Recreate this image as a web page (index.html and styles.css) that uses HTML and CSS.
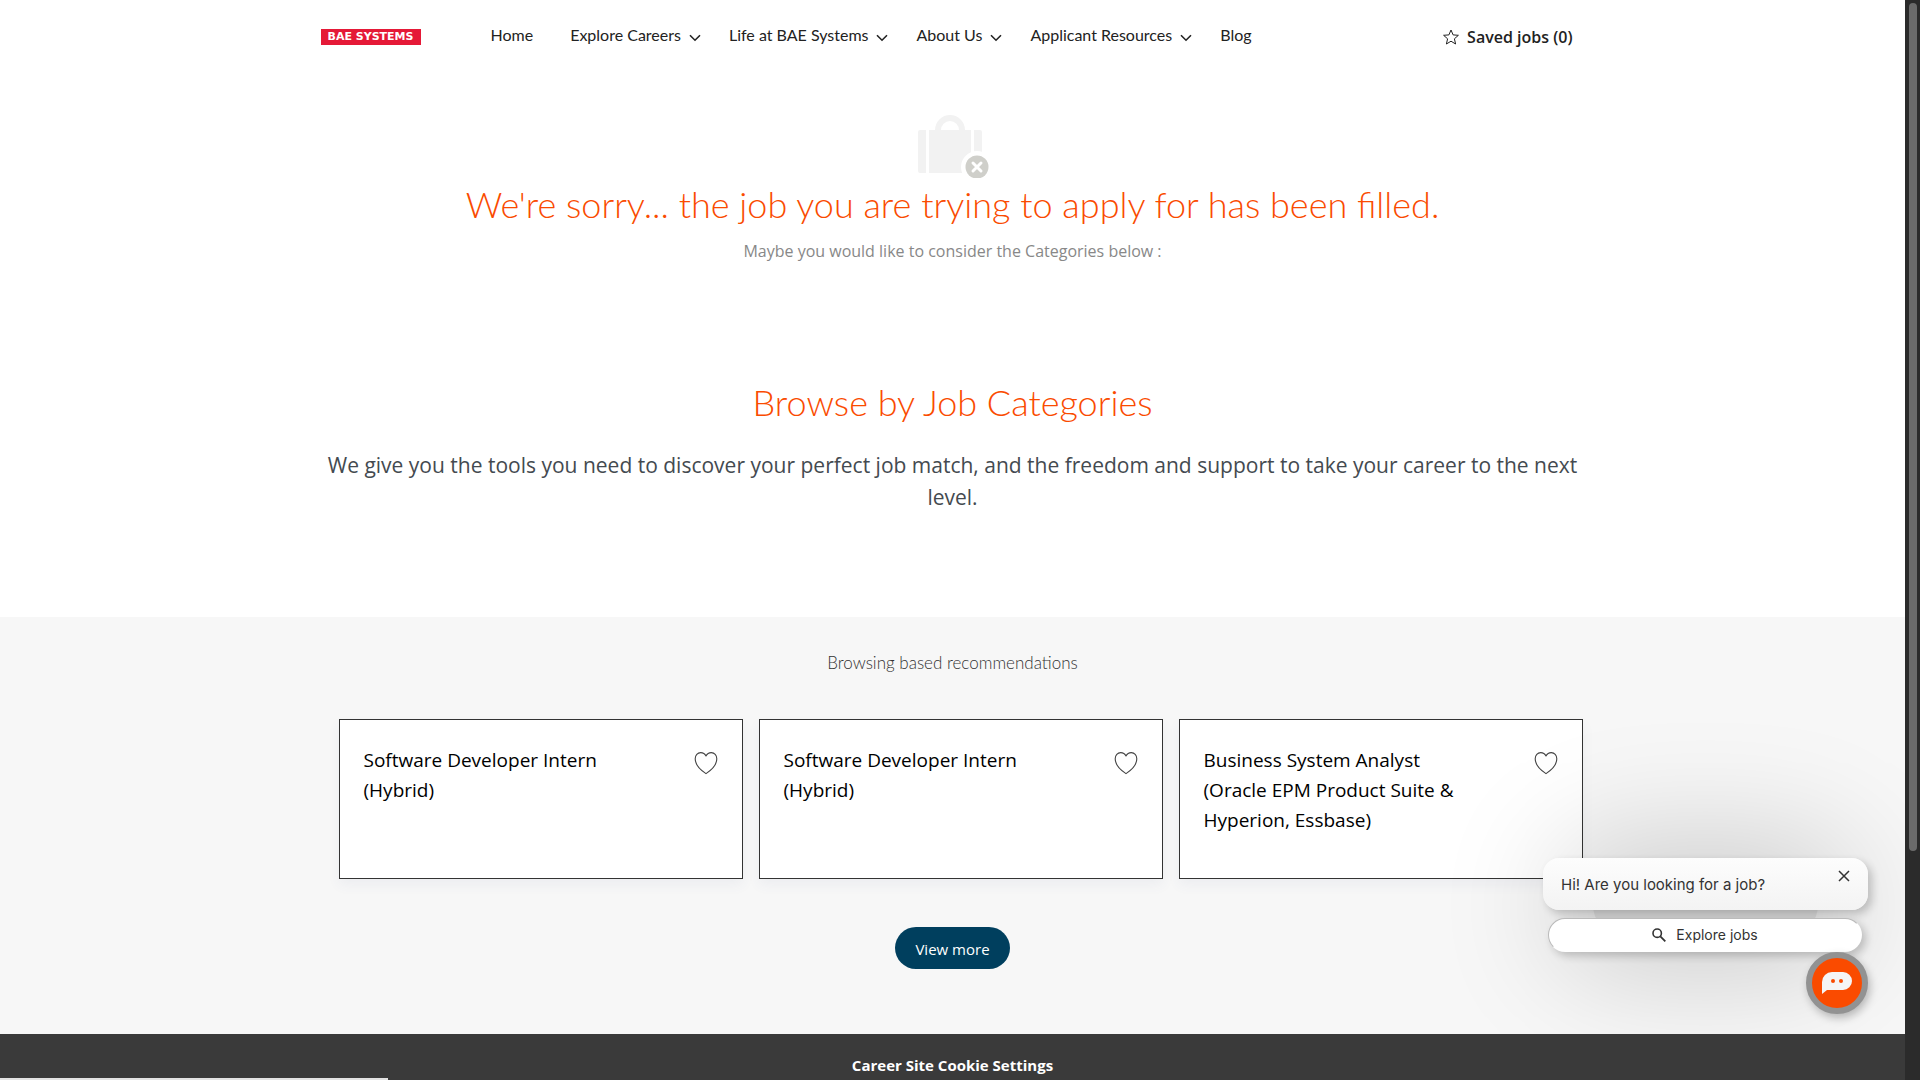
FILE: index.html
```html
<!DOCTYPE html>
<html lang="en">
<head>
<meta charset="utf-8">
<title>Job filled | BAE Systems Careers</title>
<meta name="viewport" content="width=device-width, initial-scale=1">
<link rel="stylesheet" href="styles.css">
</head>
<body>
<svg class="symbols" aria-hidden="true">
  <symbol id="chevron" viewBox="0 0 12 8"><path d="M1 1.2l5 5 5-5" fill="none" stroke="currentColor" stroke-width="1.6"/></symbol>
  <symbol id="heart" viewBox="0 0 24 24"><path d="M12 5C10.8 2.6 8.8 1.6 6.7 1.6 3.6 1.6 1.2 4.2 1.2 7.8c0 5.400 4.300 10.600 10.800 14.800 6.500-4.200 10.800-9.400 10.800-14.800 0-3.600-2.400-6.200-5.500-6.200C15.200 1.600 13.200 2.600 12 5z" fill="none" stroke="currentColor" stroke-width="1.1" stroke-linejoin="round"/></symbol>
</svg>
<div class="window">
  <div class="page">
    <header class="header wrap">
      <a class="logo" href="#">BAE SYSTEMS</a>
      <nav class="nav" aria-label="Main">
        <a href="#">Home</a>
        <a href="#">Explore Careers<svg class="chevron"><use href="#chevron"/></svg></a>
        <a href="#">Life at BAE Systems<svg class="chevron"><use href="#chevron"/></svg></a>
        <a href="#">About Us<svg class="chevron"><use href="#chevron"/></svg></a>
        <a href="#">Applicant Resources<svg class="chevron"><use href="#chevron"/></svg></a>
        <a href="#">Blog</a>
      </nav>
      <a class="saved" href="#">
        <svg class="star" viewBox="0 0 16 16"><path d="M8 1l2.100 4.900 5.300.4-4 3.500 1.200 5.200L8 12.200 3.400 15l1.200-5.200-4-3.500 5.300-.4z" fill="none" stroke="currentColor" stroke-linejoin="round"/></svg>
        Saved jobs (0)
      </a>
    </header>
    <main>
      <section class="notice wrap">
        <svg class="case" viewBox="0 0 72 64" aria-hidden="true">
          <path d="M3 16h6v43H3a2 2 0 0 1-2-2V18a2 2 0 0 1 2-2zM12 16h42v43H12zM57 16h6a2 2 0 0 1 2 2v39a2 2 0 0 1-2 2h-6z" fill="#f2f2f2"/>
          <path d="M21 18v-2a12 12 0 0 1 24 0v2" fill="none" stroke="#f2f2f2" stroke-width="6"/>
          <circle cx="60" cy="53" r="16" fill="#fff"/>
          <circle cx="60" cy="53" r="11.500" fill="#cfcfca"/>
          <path d="M56 49l8 8m0-8l-8 8" stroke="#fff" stroke-width="3" stroke-linecap="round"/>
        </svg>
        <h1 class="title">We're sorry... the job you are trying to apply for has been filled.</h1>
        <p class="hint">Maybe you would like to consider the Categories below :</p>
      </section>
      <section class="categories wrap">
        <h2 class="title">Browse by Job Categories</h2>
        <p class="lead">We give you the tools you need to discover your perfect job match, and the freedom and support to take your career to the next level.</p>
      </section>
      <section class="recommend">
        <div class="wrap">
          <h2 class="subtitle">Browsing based recommendations</h2>
          <ul class="cards">
            <li class="card">
              <h3><a href="#">Software Developer Intern (Hybrid)</a></h3>
              <button class="save" type="button" aria-label="Save job"><svg><use href="#heart"/></svg></button>
            </li>
            <li class="card">
              <h3><a href="#">Software Developer Intern (Hybrid)</a></h3>
              <button class="save" type="button" aria-label="Save job"><svg><use href="#heart"/></svg></button>
            </li>
            <li class="card">
              <h3><a href="#">Business System Analyst (Oracle EPM Product Suite &amp; Hyperion, Essbase)</a></h3>
              <button class="save" type="button" aria-label="Save job"><svg><use href="#heart"/></svg></button>
            </li>
          </ul>
          <a class="more" href="#">View more</a>
        </div>
      </section>
    </main>
    <footer class="footer"><button type="button">Career Site Cookie Settings</button></footer>
    <aside class="chat" aria-label="Chat">
      <div class="bubble">
        <p>Hi! Are you looking for a job?</p>
        <button class="close" type="button" aria-label="Close"><svg viewBox="0 0 12 12"><path d="M1 1l10 10M11 1L1 11" stroke="currentColor" stroke-width="1.500"/></svg></button>
      </div>
      <button class="explore" type="button">
        <svg viewBox="0 0 14 14"><circle cx="5.200" cy="5.200" r="4.200" fill="none" stroke="currentColor" stroke-width="1.600"/><path d="M8.300 8.300l5 5" stroke="currentColor" stroke-width="1.800"/></svg>
        Explore jobs
      </button>
      <button class="launcher" type="button" aria-label="Open chat">
        <svg viewBox="0 0 30 22"><path d="M10 0h11a9 9 0 0 1 0 18H5L0 22V10A10 10 0 0 1 10 0z" fill="#f5f5f5"/><circle cx="11" cy="9" r="2" fill="#fa4b00"/><circle cx="19" cy="9" r="2" fill="#fa4b00"/></svg>
      </button>
    </aside>
    <div class="status"></div>
  </div>
  <div class="scrollbar" aria-hidden="true"><div class="thumb"></div></div>
</div>
</body>
</html>
```
FILE: styles.css
```css
* { box-sizing: border-box; }
body {
  margin: 0;
  font-family: "Open Sans", "Noto Sans", sans-serif;
  font-size: 16px;
  line-height: 24px;
  color: #222;
  background: #fff;
}
h1, h2, h3, p, ul { margin: 0; padding: 0; font-weight: 400; }
a { color: inherit; text-decoration: none; }
button { font: inherit; color: inherit; border: 0; padding: 0; background: none; cursor: pointer; }
svg { display: block; }
.symbols { display: none; }

.window { display: flex; height: 100vh; overflow: hidden; }
.page { flex: 1; display: flex; flex-direction: column; position: relative; overflow: hidden; }
.wrap { width: 100%; max-width: 1264px; margin: 0 auto; }

.header { display: flex; align-items: center; padding: 23px 12px 22px 0; }
.logo {
  width: 100px;
  padding: 1px 0;
  background: #e51937;
  color: #fff;
  font: 700 11px/14px "DejaVu Sans", sans-serif;
  text-align: center;
}
.nav {
  display: flex;
  gap: 37px;
  margin: 0 auto 3px 70px;
  font-family: "Lato", sans-serif;
}
.nav a { display: flex; align-items: center; gap: 8px; }
.chevron { width: 12px; height: 8px; margin-top: 5px; }
.nav a:has(.chevron) { margin-right: -9px; }
.saved { display: flex; align-items: center; gap: 8px; font-weight: 600; }
.star { width: 16px; height: 16px; }

.notice { padding-top: 42px; text-align: center; }
.case { width: 72px; height: 64px; margin: 0 auto 4px; }
.title { font: 300 36px/44px "Lato", sans-serif; color: #fa4b00; }
.hint { margin-top: 13px; color: #888; }
.categories { padding: 117px 0 104px; text-align: center; }
.lead { margin-top: 25px; font-size: 21px; line-height: 32px; color: #444a50; }

.recommend { background: #f7f7f7; padding: 34px 0 65px; }
.subtitle { font: 300 17px/24px "Lato", sans-serif; text-align: center; color: #333; }
.cards {
  display: grid;
  grid-template-columns: repeat(3, 1fr);
  gap: 16px;
  margin: 44px 2px 48px 18px;
  list-style: none;
}
.card {
  display: flex;
  justify-content: space-between;
  align-items: flex-start;
  min-height: 160px;
  padding: 25px 24px;
  background: #fff;
  border: 1px solid #333;
  box-shadow: 0 6px 12px rgba(60, 80, 140, .06);
}
.card h3 { max-width: 270px; font-size: 19px; line-height: 30px; color: #000; }
.save { margin-top: 6px; color: #444; }
.save svg { width: 24px; height: 24px; }
.more {
  display: block;
  width: 115px;
  margin: 0 auto;
  padding: 10px 0 8px;
  border-radius: 21px;
  background: #003f5e;
  color: #fff;
  font-size: 15px;
  text-align: center;
}

.footer { flex: 1; position: relative; z-index: 2; padding: 19px 0; background: #3a3a3a; text-align: center; }
.footer button { display: block; margin: 0 auto; color: #fff; font-size: 15px; font-weight: 700; line-height: 24px; }

.chat {
  position: absolute;
  z-index: 1;
  right: 37px;
  bottom: 66px;
  width: 325px;
  display: flex;
  flex-direction: column;
  color: #333;
  font-family: "Inter", sans-serif;
}
.chat::before {
  content: "";
  position: absolute;
  inset: 20px 50px 80px;
  z-index: -1;
  border-radius: 40px;
  background: rgba(0, 0, 0, .15);
  box-shadow: 0 0 120px 40px rgba(0, 0, 0, .17);
}
.bubble {
  display: flex;
  align-items: flex-start;
  justify-content: space-between;
  padding: 12px 18px 13px;
  border-radius: 16px;
  background: linear-gradient(#fdfdfd, #f3f3f3);
  box-shadow: 4px 4px 8px rgba(0, 0, 0, .2);
  font-size: 15px;
}
.bubble p { padding-top: 3px; line-height: 24px; }
.close svg { width: 12px; height: 12px; }
.explore {
  display: flex;
  align-items: center;
  justify-content: center;
  gap: 10px;
  height: 34px;
  margin: 8px 6px 0 5px;
  border: 1px solid #bbb;
  border-color: #bbb transparent transparent #bbb;
  border-radius: 17px;
  background: #fff;
  box-shadow: 4px 4px 8px rgba(0, 0, 0, .2);
  font-size: 14px;
}
.explore svg { width: 14px; height: 14px; }
.launcher {
  display: grid;
  place-items: center;
  align-self: flex-end;
  width: 62px;
  height: 62px;
  border: 6px solid #929292;
  border-radius: 50%;
  background: #fa4b00;
  box-shadow: 2px 4px 8px rgba(0, 0, 0, .25);
}
.launcher svg { width: 30px; height: 22px; }

.status { position: absolute; z-index: 3; left: 0; bottom: 0; width: 388px; height: 2px; background: #e3e3e3; }
.scrollbar { width: 15px; padding: 3px 3px 3px 4px; background: #2b2b2b; }
.thumb { height: 79%; border-radius: 4px; background: #6b6b6b; }
```
